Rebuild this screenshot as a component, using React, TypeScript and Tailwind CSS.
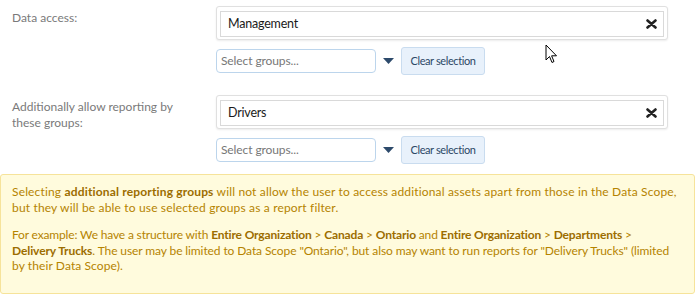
import React from "react";

const font = { fontFamily: "Lato, 'Open Sans', sans-serif" };

function TagBox({ value }: { value: string }) {
  return (
    <div className="w-[452px] h-[34px] border border-[#e0e0e0] rounded-[3px] shadow-[0_1px_2px_rgba(0,0,0,0.08)] bg-white pt-[4px] px-[3px]">
      <div className="h-[26px] border border-[#d9d9d9] flex items-center justify-between pl-[7px] pr-[6px]">
        <span className="text-[12.5px] tracking-[-0.2px] text-[#1a1a1a]">{value}</span>
        <svg width="11" height="10" viewBox="0 0 11 10">
          <path d="M1.5 1.5 L9.5 8.5 M9.5 1.5 L1.5 8.5" stroke="#222" strokeWidth="2.6" strokeLinecap="round" />
        </svg>
      </div>
    </div>
  );
}

function SelectRow() {
  return (
    <div className="flex items-center mt-[7px]">
      <div className="w-[160px] h-[24px] border border-[#bcd5ec] rounded-[4px] flex items-center pl-[4px] text-[12px] tracking-[-0.1px] text-[#777]">
        Select groups...
      </div>
      <svg className="ml-[7px]" width="11" height="6" viewBox="0 0 11 6">
        <path d="M0 0 H11 L5.5 6 Z" fill="#2d4a6b" />
      </svg>
      <button className="ml-[7px] w-[84px] h-[28px] rounded-[3px] border border-[#c9dcef] bg-[#e8f1fb] text-[11px] tracking-[-0.4px] text-[#2c4866]">
        Clear selection
      </button>
    </div>
  );
}

const B = ({ children }: { children: React.ReactNode }) => (
  <b className="font-bold text-[#9c6d00]">{children}</b>
);

export default function App() {
  return (
    <div className="relative w-[697px] h-[297px] bg-white" style={font}>
      <div className="pt-[6px]">
        <div className="flex">
          <div className="w-[216px] pl-[12px] pt-[4px] text-[12px] text-[#7a7a7a] leading-[16px]">Data access:</div>
          <div>
            <TagBox value="Management" />
            <SelectRow />
          </div>
        </div>
        <div className="flex mt-[20px]">
          <div className="w-[216px] pl-[12px] pt-[4px] text-[12px] text-[#7a7a7a] leading-[15.5px]">
            Additionally allow reporting by
            <br />
            these groups:
          </div>
          <div>
            <TagBox value="Drivers" />
            <SelectRow />
          </div>
        </div>
        <div className="mt-[10px] w-[695px] border border-[#f6e39a] rounded-[3px] bg-[#fffbdd] pl-[11px] pr-[4px] pt-[9px] pb-[19px] text-[12px] leading-[15.5px] text-[#b58300] whitespace-nowrap">
          <p className="tracking-[0.16px]">
            Selecting <B>additional reporting groups</B> will not allow the user to access additional assets apart from those in the Data Scope,
            <br />
            but they will be able to use selected groups as a report filter.
          </p>
          <p className="mt-[12px]">
            <span className="tracking-[-0.16px]">
              For example: We have a structure with <B>Entire Organization</B> &gt; <B>Canada</B> &gt; <B>Ontario</B> and <B>Entire Organization</B> &gt; <B>Departments</B> &gt;
            </span>
            <br />
            <span className="tracking-[-0.1px]">
              <B>Delivery Trucks</B>. The user may be limited to Data Scope "Ontario", but also may want to run reports for "Delivery Trucks" (limited
            </span>
            <br />
            <span className="tracking-[0.1px]">by their Data Scope).</span>
          </p>
        </div>
      </div>
      <svg className="absolute left-[545px] top-[44px]" width="13" height="20" viewBox="0 0 13 20">
        <path d="M1 1 L1 16 L4.5 12.5 L7 18.5 L9 17.5 L6.6 11.8 L11.5 11.8 Z" fill="#fff" stroke="#000" strokeWidth="1" strokeLinejoin="round" />
      </svg>
    </div>
  );
}
